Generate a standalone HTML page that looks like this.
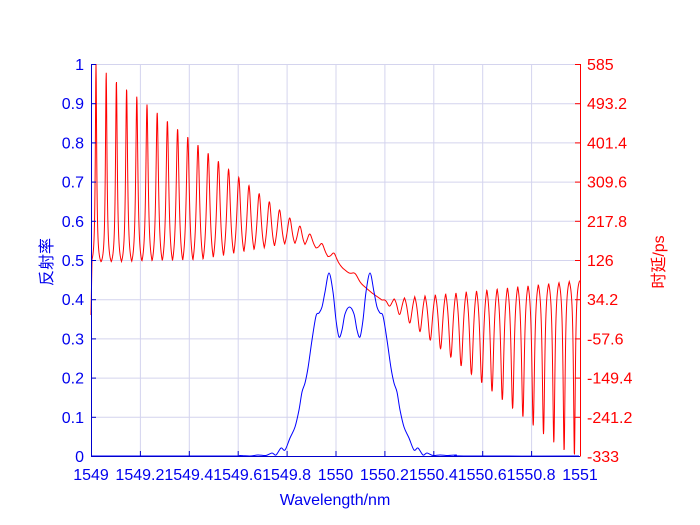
<!DOCTYPE html>
<html><head><meta charset="utf-8"><style>
html,body{margin:0;padding:0;background:#fff;width:700px;height:525px;overflow:hidden}
svg{display:block}
text{font-family:"Liberation Sans","Noto Sans CJK SC",sans-serif;font-size:16px}
</style></head><body>
<svg id="s" width="700" height="525" viewBox="0 0 700 525" xmlns="http://www.w3.org/2000/svg">
<g id="grid" stroke="#d4d4ee" stroke-width="1"></g>
<path id="red" fill="none" stroke="#ff0000" stroke-width="1"/>
<path id="blue" fill="none" stroke="#0000ff" stroke-width="1"/>
<g id="axes"></g>
<text x="335" y="505" fill="#0000ee" text-anchor="middle">Wavelength/nm</text>
<text transform="translate(52,262) rotate(-90)" fill="#0000ee" text-anchor="middle">反射率</text>
<text transform="translate(664,262) rotate(-90)" fill="#ff0000" text-anchor="middle">时延/ps</text>
</svg>
<script>
var NS="http://www.w3.org/2000/svg";
var L=91,R=580,T=64,B=456,W=R-L,H=B-T;
function el(p,tag,a,txt){var e=document.createElementNS(NS,tag);for(var k in a)e.setAttribute(k,a[k]);if(txt!=null)e.textContent=txt;p.appendChild(e);return e;}
var g=document.getElementById('grid'),ax=document.getElementById('axes');
var rl=["585","493.2","401.4","309.6","217.8","126","34.2","-57.6","-149.4","-241.2","-333"];
for(var i=0;i<=10;i++){
  var y=B-H*i/10;
  el(g,'line',{x1:L,x2:R,y1:y+0.5,y2:y+0.5});
  el(ax,'line',{x1:L,x2:L+5,y1:y+0.5,y2:y+0.5,stroke:'#0000cc'});
  el(ax,'line',{x1:R-5,x2:R,y1:y+0.5,y2:y+0.5,stroke:'#ff0000'});
  var lab=(i==0?"0":i==10?"1":"0."+i);
  el(ax,'text',{x:84,y:y+6,fill:'#0000ee','text-anchor':'end'},lab);
  el(ax,'text',{x:587,y:y+6,fill:'#ff0000'},rl[10-i]);
}
var xl=["1549","1549.2","1549.4","1549.6","1549.8","1550","1550.2","1550.4","1550.6","1550.8","1551"];
for(var i=0;i<=10;i++){
  var x=L+W*i/10;
  el(g,'line',{x1:x+0.5,x2:x+0.5,y1:T,y2:B});
  el(ax,'line',{x1:x+0.5,x2:x+0.5,y1:B-5,y2:B,stroke:'#0000cc'});
  el(ax,'text',{x:x,y:480,fill:'#0000ee','text-anchor':'middle'},xl[i]);
}
el(ax,'line',{x1:L+0.5,x2:L+0.5,y1:T,y2:B+0.5,stroke:'#0000cc'});
el(ax,'line',{x1:L,x2:R,y1:B+0.5,y2:B+0.5,stroke:'#0000cc'});
el(ax,'line',{x1:R+0.5,x2:R+0.5,y1:T,y2:B+0.5,stroke:'#ff0000'});

function interp(pts,x){if(x<=pts[0][0])return pts[0][1];for(var i=0;i<pts.length-1;i++){if(x<=pts[i+1][0]){var a=pts[i],b=pts[i+1];return a[1]+(b[1]-a[1])*(x-a[0])/(b[0]-a[0]);}}return pts[pts.length-1][1];}
var tP=[[96,262],[200,260],[290,243],[312,245],[330,258],[345,270],[372,293],[382,300],[575,281]];
var ev=[];
for(var k=0;k<=20;k++)ev.push([96+10.2*k,0]);
[310,322,334].forEach(function(v){ev.push([v,0]);});
for(var x0=378.7;x0<=578;x0+=10.3)ev.push([x0,1]);
function Lz(u){return 1/(1+u*u);}
function redY(x){
  var i=0;while(i<ev.length-1&&ev[i+1][0]<=x)i++;
  var e,d,h;
  if(x<ev[0][0]){e=ev[0];d=ev[0][0]-x;h=5.1;}
  else if(i==ev.length-1){e=ev[i];d=x-e[0];h=5.15;}
  else{var g2=(ev[i+1][0]-ev[i][0])/2;h=g2;if(x-ev[i][0]<g2){e=ev[i];d=x-ev[i][0];}else{e=ev[i+1];d=ev[i+1][0]-x;}}
  if(h>9)h=9;
  var base=interp(tP,x),A,w;
  if(e[1]==0){var top=64+0.795*(x-96);A=Math.min(0,top-base);w=0.8+(x-96)*0.012;}
  else{var dp=Math.min(456,315+0.83*(x-400));A=Math.max(0,dp-base);w=Math.max(1.0,3.5-(x-389)*0.013);}
  var l0=Lz(h/w),lv=(Lz(d/w)-l0)/(1-l0);if(lv<0)lv=0;
  var y=base+A*lv;
  // small bump near centre
  y-=5*Math.exp(-Math.pow((x-355)/4,2));
  return y;
}
var p="M91,315";
for(var x=92;x<=580;x+=0.25){p+=" L"+x.toFixed(2)+","+redY(x).toFixed(2);}
document.getElementById('red').setAttribute('d',p);

var bp=[[91,456],[230,456],[240,455.5],[250,456],[258,455],[266,455.5],[272,453],[276,455],[281,448],[285,450],[290,438],[295,427],[299,410],[302,392],[305,383],[308,368],[312,340],[316,316],[319,313],[322,307],[325,292],[329,273],[333,292],[336,320],[339,337],[342,330],[345,314],[349.5,307],[354,314],[357,330],[360,337],[363,320],[366,292],[370,273],[374,292],[377,307],[380,313],[383,316],[387,340],[391,368],[394,383],[397,392],[400,410],[404,427],[409,438],[414,450],[418,448],[423,455],[427,453],[433,455.5],[440,455],[448,455.5],[456,455],[466,456],[579,456]];
var q="M"+bp[0][0]+","+bp[0][1];
for(var i=0;i<bp.length-1;i++){
  var p0=bp[Math.max(0,i-1)],p1=bp[i],p2=bp[i+1],p3=bp[Math.min(bp.length-1,i+2)];
  var c1x=p1[0]+(p2[0]-p0[0])/6,c1y=p1[1]+(p2[1]-p0[1])/6;
  var c2x=p2[0]-(p3[0]-p1[0])/6,c2y=p2[1]-(p3[1]-p1[1])/6;
  q+=" C"+c1x.toFixed(2)+","+c1y.toFixed(2)+" "+c2x.toFixed(2)+","+c2y.toFixed(2)+" "+p2[0]+","+p2[1];
}
document.getElementById('blue').setAttribute('d',q);
</script>
</body></html>
